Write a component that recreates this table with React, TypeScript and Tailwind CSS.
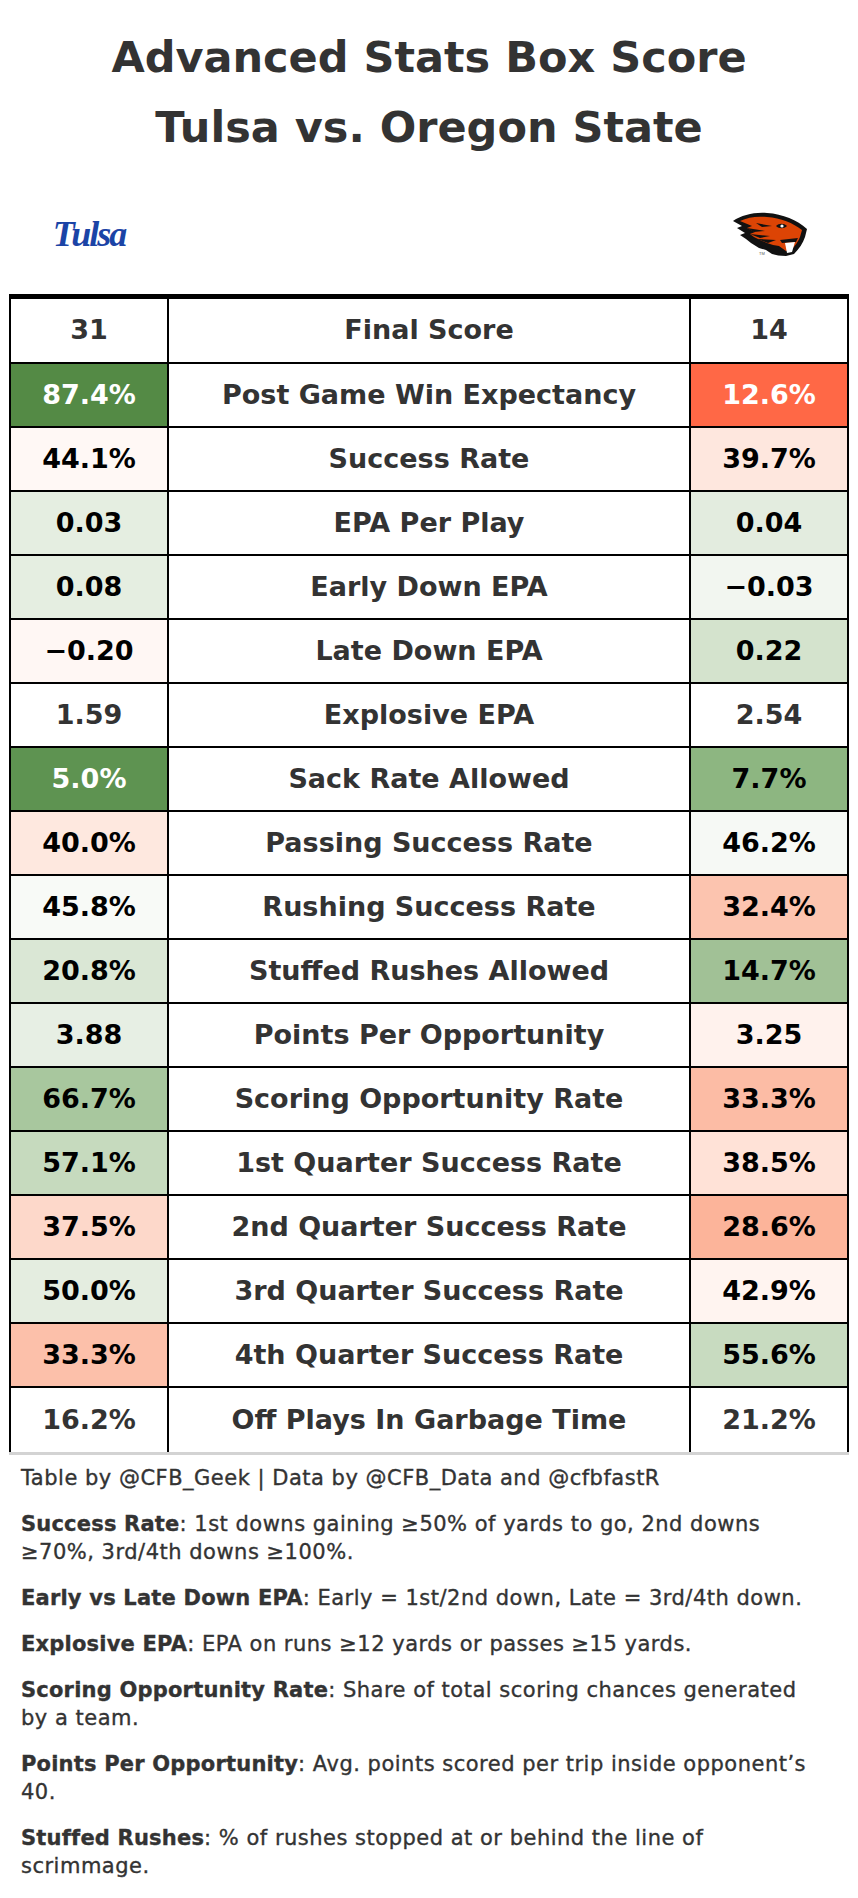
import React from "react";

type Row = {
  left: string;
  label: string;
  right: string;
  lBg?: string;
  rBg?: string;
  lText?: string;
  rText?: string;
};

const rows: Row[] = [
  { left: "31", label: "Final Score", right: "14" },
  { left: "87.4%", label: "Post Game Win Expectancy", right: "12.6%", lBg: "bg-[#548a45]", rBg: "bg-[#ff6846]", lText: "text-white", rText: "text-white" },
  { left: "44.1%", label: "Success Rate", right: "39.7%", lBg: "bg-[#fff8f5]", rBg: "bg-[#fee7de]" },
  { left: "0.03", label: "EPA Per Play", right: "0.04", lBg: "bg-[#e5eee1]", rBg: "bg-[#e3ecdf]" },
  { left: "0.08", label: "Early Down EPA", right: "\u22120.03", lBg: "bg-[#e5eee1]", rBg: "bg-[#f2f6f0]" },
  { left: "\u22120.20", label: "Late Down EPA", right: "0.22", lBg: "bg-[#fff7f4]", rBg: "bg-[#d4e3cd]" },
  { left: "1.59", label: "Explosive EPA", right: "2.54" },
  { left: "5.0%", label: "Sack Rate Allowed", right: "7.7%", lBg: "bg-[#5e9351]", rBg: "bg-[#8db681]", lText: "text-white" },
  { left: "40.0%", label: "Passing Success Rate", right: "46.2%", lBg: "bg-[#fee8df]", rBg: "bg-[#f6f9f5]" },
  { left: "45.8%", label: "Rushing Success Rate", right: "32.4%", lBg: "bg-[#f8faf7]", rBg: "bg-[#fcc4af]" },
  { left: "20.8%", label: "Stuffed Rushes Allowed", right: "14.7%", lBg: "bg-[#dae7d5]", rBg: "bg-[#a1c196]" },
  { left: "3.88", label: "Points Per Opportunity", right: "3.25", lBg: "bg-[#e7efe4]", rBg: "bg-[#fff2ed]" },
  { left: "66.7%", label: "Scoring Opportunity Rate", right: "33.3%", lBg: "bg-[#a8c79e]", rBg: "bg-[#fcbca5]" },
  { left: "57.1%", label: "1st Quarter Success Rate", right: "38.5%", lBg: "bg-[#c6dabe]", rBg: "bg-[#ffe2d7]" },
  { left: "37.5%", label: "2nd Quarter Success Rate", right: "28.6%", lBg: "bg-[#fdd8ca]", rBg: "bg-[#fcb49a]" },
  { left: "50.0%", label: "3rd Quarter Success Rate", right: "42.9%", lBg: "bg-[#e4ede0]", rBg: "bg-[#fff4f0]" },
  { left: "33.3%", label: "4th Quarter Success Rate", right: "55.6%", lBg: "bg-[#fcc0aa]", rBg: "bg-[#c8dbc0]" },
  { left: "16.2%", label: "Off Plays In Garbage Time", right: "21.2%" },
];

const notes: { label: string; lines: string[] }[] = [
  { label: "Success Rate", lines: [": 1st downs gaining \u226550% of yards to go, 2nd downs", "\u226570%, 3rd/4th downs \u2265100%."] },
  { label: "Early vs Late Down EPA", lines: [": Early = 1st/2nd down, Late = 3rd/4th down."] },
  { label: "Explosive EPA", lines: [": EPA on runs \u226512 yards or passes \u226515 yards."] },
  { label: "Scoring Opportunity Rate", lines: [": Share of total scoring chances generated", "by a team."] },
  { label: "Points Per Opportunity", lines: [": Avg. points scored per trip inside opponent\u2019s", "40."] },
  { label: "Stuffed Rushes", lines: [": % of rushes stopped at or behind the line of", "scrimmage."] },
];

const BeaverLogo = () => (
  <svg width="76" height="44" viewBox="0 0 76 44">
    {/* outline */}
    <path
      d="M1 9 C10 3 22 0 35 1 C51 2 65 8 75 17 L73 25 C71 31 67 37 62 42 L54 44 C48 44 44 43 40 42 L34 38 L27 36 L19 31 L14 27 L8 23 L13 21 L5 16 L10 14 Z"
      fill="#111"
    />
    {/* orange head */}
    <path
      d="M8 9 C16 5 25 4 35 5 C49 6 61 11 70 18 L68 25 C66 30 63 34 60 37 L54 39 L47 34 L41 33 L35 31 L28 28 L22 25 L18 22 L23 20 L15 16 L20 14 Z"
      fill="#dc4405"
    />
    {/* fur streaks */}
    <path d="M15 16 L33 19 L22 20 Z" fill="#111" />
    <path d="M18 22 L38 24 L28 26 Z" fill="#111" />
    <path d="M25 27 L44 28 L36 31 Z" fill="#111" />
    <path d="M24 11 L40 14 L30 15 Z" fill="#111" />
    {/* eye */}
    <path d="M44 14 C47 11 52 11 55 14 C52 17 47 17 44 14 Z" fill="#111" />
    <circle cx="50" cy="14" r="1.6" fill="#fff" />
    {/* mouth and teeth */}
    <path d="M48 28 L66 26 L64 30 L50 31 Z" fill="#111" />
    <path d="M53 31 L63 30 L60 40 L55 41 Z" fill="#fff" />
    <text x="27" y="43" fontSize="4" fill="#555" fontFamily="Liberation Sans, sans-serif">TM</text>
  </svg>
);

export default function App() {
  return (
    <div
      className="w-[858px] bg-white text-[#333]"
      style={{ fontFamily: "'DejaVu Sans', sans-serif" }}
    >
      {/* Title */}
      <div className="pt-[22px] text-center text-[43px] font-bold leading-[70px]">
        <div>Advanced Stats Box Score</div>
        <div>Tulsa vs. Oregon State</div>
      </div>

      {/* Logos */}
      <div className="mx-[9px] flex h-[132px] items-center pt-[12px]">
        <div className="flex w-[160px] justify-center">
          <span
            className="text-[36px] font-bold italic leading-none tracking-[-2px] text-[#1b44a6]"
            style={{ fontFamily: "'Liberation Serif', serif" }}
          >
            Tulsa
          </span>
        </div>
        <div className="flex-1" />
        <div className="flex w-[158px] justify-center">
          <BeaverLogo />
        </div>
      </div>

      {/* Table */}
      <div className="mx-[9px] w-[840px] border-x-2 border-t-[5px] border-black">
        {rows.map((r, i) => {
          const last = i === rows.length - 1;
          return (
            <div
              key={r.label}
              className={`flex text-[27px] font-bold ${
                i === 0 ? "h-[65px]" : "h-[64px]"
              } ${last ? "border-b-0" : "border-b-2 border-black"}`}
            >
              <div
                className={`flex w-[156px] items-center justify-center ${r.lBg ?? ""} ${
                  r.lText ?? (r.lBg ? "text-black" : "text-[#333]")
                }`}
              >
                {r.left}
              </div>
              <div className="flex w-[522px] items-center justify-center border-l-2 border-black">
                {r.label}
              </div>
              <div
                className={`flex w-[158px] items-center justify-center border-l-2 border-black ${r.rBg ?? ""} ${
                  r.rText ?? (r.rBg ? "text-black" : "text-[#333]")
                }`}
              >
                {r.right}
              </div>
            </div>
          );
        })}
      </div>
      <div className="mx-[9px] h-[3px] w-[840px] bg-[#d3d3d3]" />

      {/* Footer */}
      <div className="px-[21px] pb-[20px] pt-[9px] text-[21px] leading-[28px] tracking-[0.5px] [-webkit-text-stroke:0.35px_#333]">
        <div>Table by @CFB_Geek | Data by @CFB_Data and @cfbfastR</div>
        {notes.map((n) => (
          <div key={n.label} className="mt-[18px]">
            <span className="font-bold tracking-[0.2px]">{n.label}</span>
            {n.lines.map((l, j) => (
              <React.Fragment key={j}>
                {j > 0 && <br />}
                {l}
              </React.Fragment>
            ))}
          </div>
        ))}
      </div>
    </div>
  );
}
